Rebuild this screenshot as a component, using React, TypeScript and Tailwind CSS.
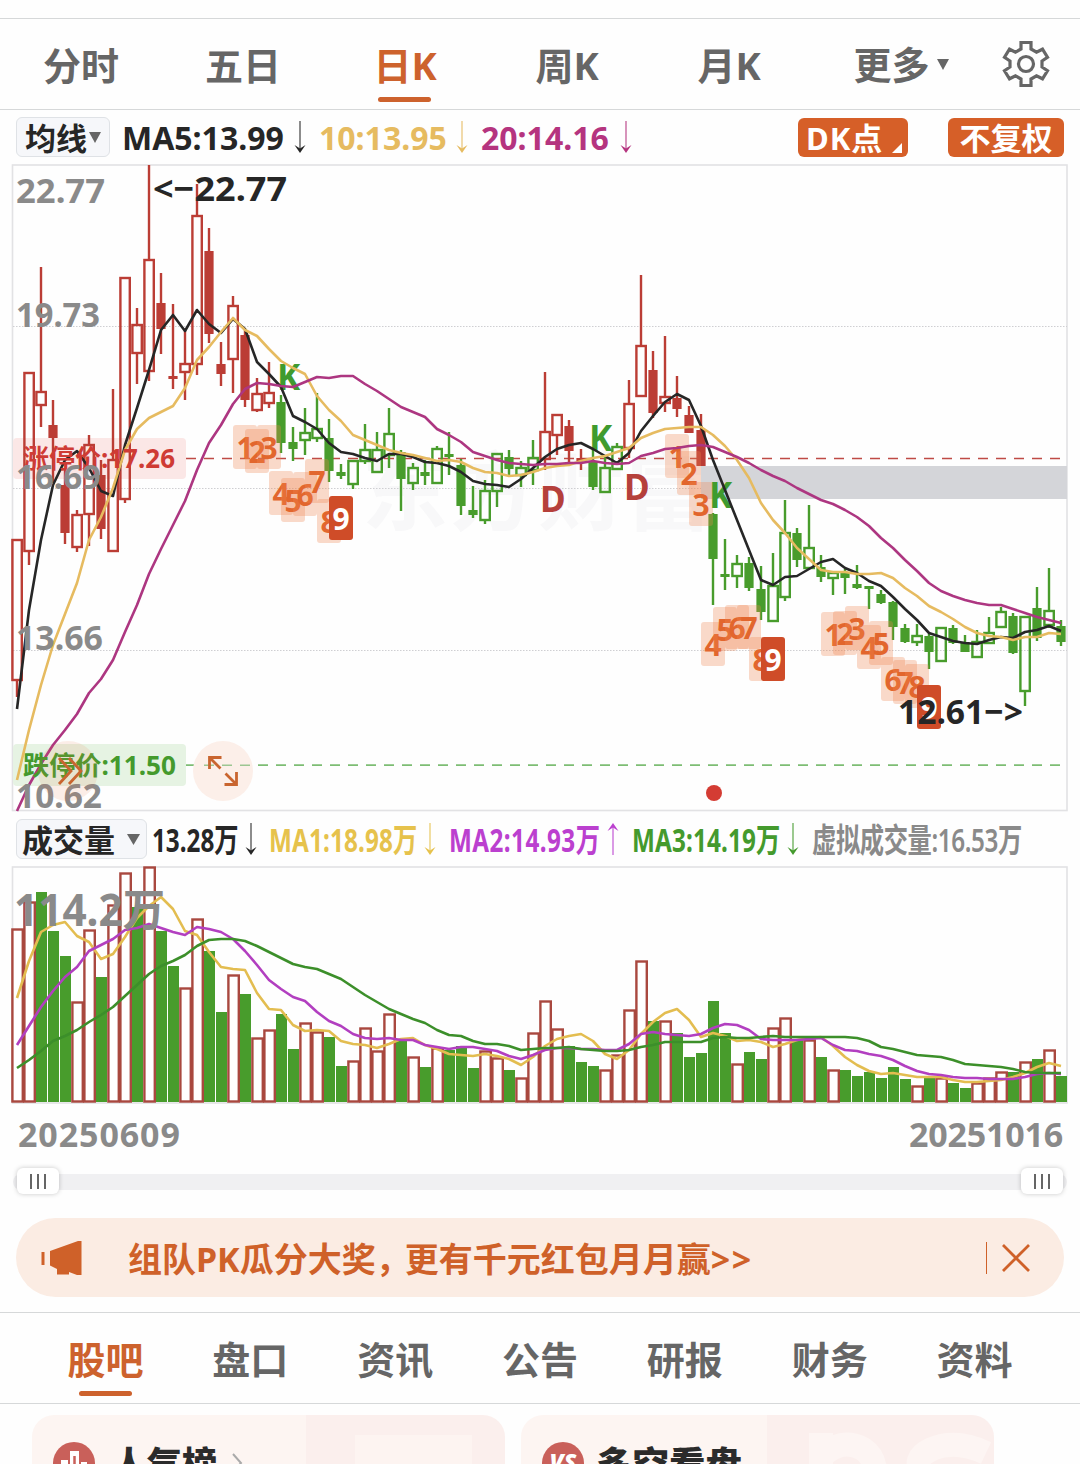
import clsx from "clsx";

const RED = "#bb3d35";
const GREEN = "#489c2c";

// R/G = hollow candle, r/g = filled candle: [kind, high, bodyTop, bodyBottom, low]
type Candle = [string, number, number, number, number];

const candles: Candle[] = [
  ["R", 540, 540, 680, 697], ["R", 373, 373, 551, 565], ["R", 267, 392, 405, 427],
  ["r", 400, 425, 438, 483], ["r", 468, 485, 533, 544], ["R", 510, 515, 547, 552],
  ["R", 435, 445, 514, 546], ["r", 460, 475, 529, 539], ["R", 389, 460, 551, 551],
  ["R", 278, 278, 499, 503], ["R", 308, 325, 353, 384], ["R", 165, 260, 371, 381],
  ["r", 273, 303, 329, 354], ["r", 304, 376, 379, 389], ["R", 330, 364, 372, 400],
  ["R", 184, 216, 364, 375], ["r", 228, 251, 334, 343], ["r", 342, 364, 374, 386],
  ["R", 296, 306, 359, 393], ["r", 330, 335, 400, 407], ["R", 378, 394, 410, 412],
  ["R", 362, 393, 403, 408], ["g", 395, 402, 443, 453], ["g", 427, 442, 449, 461],
  ["G", 408, 433, 440, 455], ["G", 393, 429, 438, 442], ["g", 419, 438, 471, 482],
  ["g", 464, 472, 476, 479], ["G", 461, 461, 484, 489], ["G", 424, 450, 461, 464],
  ["G", 432, 450, 472, 472], ["G", 408, 434, 455, 468], ["g", 450, 452, 479, 511],
  ["G", 463, 468, 483, 490], ["g", 460, 472, 476, 485], ["G", 446, 449, 483, 483],
  ["g", 432, 454, 457, 475], ["g", 459, 465, 506, 515], ["g", 486, 510, 515, 518],
  ["G", 480, 491, 520, 524], ["G", 454, 454, 491, 507], ["g", 450, 457, 469, 476],
  ["G", 461, 468, 475, 487], ["G", 440, 458, 470, 485], ["R", 372, 432, 459, 470],
  ["R", 414, 415, 435, 455], ["r", 420, 426, 451, 465], ["r", 449, 458, 461, 470],
  ["g", 450, 462, 487, 490], ["G", 455, 468, 492, 492], ["G", 443, 447, 469, 469],
  ["R", 380, 404, 448, 458], ["R", 275, 346, 396, 396], ["r", 351, 370, 413, 418],
  ["R", 336, 397, 403, 412], ["r", 376, 398, 409, 417], ["r", 406, 415, 433, 433],
  ["r", 414, 430, 466, 466], ["g", 513, 514, 559, 605], ["g", 539, 574, 577, 590],
  ["G", 555, 564, 576, 588], ["g", 557, 563, 588, 591], ["g", 566, 589, 612, 620],
  ["G", 553, 586, 621, 621], ["G", 500, 533, 597, 601], ["g", 528, 533, 560, 567],
  ["G", 505, 548, 568, 568], ["g", 555, 567, 577, 582], ["G", 573, 573, 578, 595],
  ["g", 569, 573, 578, 594], ["g", 565, 584, 588, 589], ["g", 587, 586, 589, 609],
  ["g", 590, 594, 603, 604], ["g", 601, 602, 627, 640], ["g", 624, 628, 642, 643],
  ["G", 624, 636, 642, 646], ["g", 634, 636, 652, 669], ["G", 628, 628, 661, 661],
  ["g", 625, 628, 643, 644], ["g", 635, 643, 652, 652], ["G", 630, 642, 657, 657],
  ["G", 617, 633, 643, 643], ["G", 607, 612, 627, 627], ["g", 613, 616, 653, 654],
  ["G", 617, 617, 691, 706], ["g", 587, 608, 638, 641], ["G", 568, 611, 625, 628],
  ["g", 620, 626, 642, 646],
];

const ma5 = [
  709, 610, 540, 485, 460, 451, 468, 491, 496, 445, 408, 370, 330, 315, 331, 310, 324, 333, 319, 329,
  362, 374, 387, 416, 422, 429, 443, 452, 454, 458, 461, 454, 454, 457, 462, 463, 466, 472, 481, 484,
  485, 487, 479, 468, 457, 449, 445, 443, 449, 456, 463, 453, 431, 416, 402, 394, 400, 426, 460, 490,
  520, 550, 580, 585, 577, 576, 569, 562, 559, 568, 573, 581, 586, 597, 609, 620, 633, 637, 641, 643,
  644, 640, 637, 638, 632, 630, 626, 631,
];
const ma10 = [
  780, 730, 685, 645, 614, 583, 540, 517, 488, 450, 429, 418, 412, 406, 388, 360, 347, 332, 318, 330,
  336, 349, 361, 368, 374, 396, 410, 421, 435, 440, 445, 450, 453, 455, 458, 461, 460, 462, 468, 472,
  473, 476, 475, 472, 468, 466, 465, 461, 458, 456, 452, 448, 438, 433, 429, 428, 427, 427, 435, 446,
  460, 478, 503, 520, 533, 548, 559, 570, 572, 572, 574, 574, 573, 578, 588, 596, 606, 612, 619, 627,
  633, 636, 637, 640, 637, 637, 633, 634,
];
const ma20 = [
  811, 785, 764, 745, 730, 714, 693, 679, 660, 632, 605, 574, 549, 525, 501, 470, 443, 425, 404, 389,
  383, 384, 386, 387, 382, 377, 378, 376, 376, 384, 391, 399, 407, 412, 417, 429, 435, 442, 452, 456,
  460, 463, 464, 465, 464, 464, 463, 463, 461, 463, 464, 463, 456, 453, 449, 448, 446, 445, 447, 452,
  457, 463, 470, 476, 481, 488, 494, 500, 504, 510, 517, 526, 538, 548, 560, 571, 583, 591, 596, 600,
  603, 605, 605, 609, 613, 617, 620, 623,
];

const volumeKinds =
  "RRGGGRRGRRGRGGRRGGRGRRGGRRGGRRRRGRGRGGGRRGRRRRGGGRRRRGRGGGGGRGGRRGRGRGGGGGGRGRGGRRRGRGRG";
const volumes = [
  929, 902, 892, 931, 956, 1002, 930, 977, 905, 873, 907, 867, 931, 966, 988, 919, 951, 1012, 975, 994,
  1038, 1030, 1014, 1049, 1023, 1032, 1037, 1066, 1061, 1028, 1051, 1014, 1040, 1057, 1067, 1048, 1050, 1046, 1068, 1051,
  1058, 1070, 1078, 1033, 1001, 1029, 1046, 1062, 1066, 1070, 1055, 1010, 961, 1021, 1021, 1033, 1057, 1053, 1001, 1033,
  1064, 1052, 1059, 1028, 1018, 1040, 1040, 1057, 1070, 1070, 1076, 1072, 1078, 1067, 1079, 1086, 1077, 1078, 1083, 1088,
  1083, 1078, 1072, 1072, 1062, 1059, 1050, 1076,
];
const volMa1 = [
  998, 961, 932, 925, 922, 936, 942, 959, 954, 937, 918, 906, 897, 909, 931, 935, 952, 967, 969, 970,
  993, 1009, 1010, 1025, 1031, 1030, 1031, 1041, 1044, 1045, 1048, 1044, 1039, 1038, 1045, 1049, 1054, 1055, 1056, 1054,
  1056, 1059, 1065, 1057, 1046, 1039, 1036, 1034, 1041, 1054, 1059, 1050, 1034, 1022, 1013, 1009, 1020, 1037, 1033, 1036,
  1041, 1040, 1042, 1047, 1044, 1040, 1038, 1037, 1046, 1057, 1065, 1071, 1074, 1073, 1075, 1077, 1077, 1077, 1080, 1082,
  1082, 1081, 1080, 1077, 1073, 1067, 1063, 1066,
];
const volMa2 = [
  1045, 1026, 1007, 991, 977, 967, 951, 945, 939, 930, 928, 924, 928, 932, 935, 927, 929, 932, 939, 951,
  965, 980, 989, 997, 1001, 1012, 1021, 1026, 1034, 1038, 1039, 1038, 1040, 1040, 1045, 1047, 1049, 1047, 1047, 1049,
  1051, 1056, 1059, 1055, 1050, 1048, 1048, 1049, 1049, 1050, 1050, 1044, 1034, 1032, 1034, 1035, 1036, 1034, 1028, 1024,
  1025, 1030, 1039, 1040, 1040, 1040, 1039, 1038, 1045, 1050, 1051, 1054, 1056, 1060, 1066, 1071, 1074, 1075, 1077, 1078,
  1078, 1079, 1079, 1079, 1077, 1074, 1073, 1074,
];
const volMa3 = [
  1068, 1060, 1051, 1041, 1036, 1030, 1022, 1015, 1007, 996, 985, 974, 966, 961, 955, 946, 940, 939, 939, 941,
  946, 952, 958, 964, 967, 969, 974, 979, 987, 995, 1002, 1009, 1014, 1019, 1023, 1030, 1035, 1036, 1041, 1044,
  1044, 1046, 1050, 1049, 1048, 1048, 1047, 1049, 1050, 1051, 1051, 1050, 1047, 1045, 1042, 1042, 1042, 1042, 1038, 1037,
  1038, 1038, 1037, 1036, 1037, 1037, 1037, 1037, 1037, 1037, 1038, 1041, 1047, 1049, 1052, 1055, 1056, 1057, 1060, 1064,
  1065, 1066, 1067, 1069, 1072, 1073, 1073, 1073,
];

// nine-turn marks: [candle index, number, top of the box]
const marks = [
  [19, 1, 425], [20, 2, 429], [21, 3, 425], [22, 4, 471], [23, 5, 478], [24, 6, 472], [25, 7, 459], [26, 8, 499], [27, 9, 496],
  [55, 1, 434], [56, 2, 451], [57, 3, 482], [58, 4, 622], [59, 5, 607], [60, 6, 605], [61, 7, 605], [62, 8, 637], [63, 9, 637],
  [68, 1, 612], [69, 2, 611], [70, 3, 606], [71, 4, 625], [72, 5, 621], [73, 6, 657], [74, 7, 660], [75, 8, 664], [76, 9, 685],
];

const kdMarks = [
  { t: "K", x: 277, y: 390, c: "#3f9b2f" },
  { t: "K", x: 589, y: 451, c: "#3f9b2f" },
  { t: "K", x: 709, y: 508, c: "#3f9b2f" },
  { t: "D", x: 540, y: 512, c: "#b5403b" },
  { t: "D", x: 624, y: 500, c: "#b5403b" },
];

const axis = [
  { t: "22.77", y: 203, w: 89 },
  { t: "19.73", y: 327, w: 84 },
  { t: "16.69", y: 489, w: 85 },
  { t: "13.66", y: 650, w: 87 },
  { t: "10.62", y: 808, w: 86 },
];

const xAt = (i: number) => 17 + i * 12;

function Line({ values, color }: { values: number[]; color: string }) {
  return (
    <polyline
      points={values.map((v, i) => `${xAt(i)},${v}`).join(" ")}
      fill="none"
      stroke={color}
      strokeWidth="2.6"
      strokeLinejoin="round"
    />
  );
}

function CandleShape({ item, i }: { item: Candle; i: number }) {
  const [kind, high, top, bottom, low] = item;
  const x = xAt(i);
  const color = kind === "R" || kind === "r" ? RED : GREEN;
  const hollow = kind === "R" || kind === "G";

  return (
    <g stroke={color} strokeWidth="2.4">
      {high < top && <line x1={x} x2={x} y1={high} y2={top} />}
      {low > bottom && <line x1={x} x2={x} y1={bottom} y2={low} />}
      {hollow ? (
        <rect x={x - 4.6} y={top} width="9.4" height={bottom - top} fill="none" />
      ) : (
        <rect x={x - 4.6} y={top} width="9.2" height={bottom - top} fill={color} stroke="none" />
      )}
    </g>
  );
}

function PriceChart() {
  return (
    <svg viewBox="0 164 1080 648" className="block h-[648px] w-full font-bold">
      <rect x="12.5" y="165" width="1054.5" height="645.5" fill="none" stroke="#e2e2e4" strokeWidth="1.6" />
      <text x="362" y="524" fontSize="86" textLength="350" fill="#f8f8f9">
        东方财富
      </text>
      {[326, 488, 650].map((y) => (
        <line key={y} x1="13" x2="1067" y1={y + 0.5} y2={y + 0.5} stroke="#cfcfd2" strokeDasharray="1.5 1.5" />
      ))}
      <rect x="701" y="466" width="366" height="33" fill="#d4d5d9" />

      <rect x="13" y="438" width="173" height="41" rx="4" fill="#fbe7e6" />
      <line x1="186" x2="1062" y1="458.5" y2="458.5" stroke="#bf4b46" strokeWidth="1.5" strokeDasharray="10 8" />
      <rect x="13" y="744" width="173" height="42" rx="4" fill="#e6f3e3" />
      <line x1="186" x2="1062" y1="765.2" y2="765.2" stroke="#7dbd74" strokeWidth="1.7" strokeDasharray="10 8" />

      {candles.map((item, i) => (
        <CandleShape key={i} item={item} i={i} />
      ))}

      {marks.map(([i, n, top], k) => (
        <g key={k} fontSize="30" textAnchor="middle">
          <rect
            x={xAt(i) - 12}
            y={top}
            width="24"
            height="44"
            rx="3"
            fill={n === 9 ? "#cf4c28" : "#ee8350"}
            fillOpacity={n === 9 ? 1 : 0.3}
          />
          <text x={xAt(i)} y={top + 33.5} fill={n === 9 ? "#fff" : "#e2662d"}>
            {n}
          </text>
        </g>
      ))}
      {kdMarks.map((m) => (
        <text key={m.x} x={m.x} y={m.y} fontSize="35" fill={m.c}>
          {m.t}
        </text>
      ))}

      <Line values={ma5} color="#262626" />
      <Line values={ma10} color="#e6bb60" />
      <Line values={ma20} color="#ad3681" />

      <g fontSize="26">
        <text x="23" y="468" fill="#cf3b34" textLength="152" lengthAdjust="spacingAndGlyphs">
          涨停价:17.26
        </text>
        <text x="23" y="775" fill="#449a2d" textLength="153" lengthAdjust="spacingAndGlyphs">
          跌停价:11.50
        </text>
      </g>
      <g fontSize="34.5" fill="#8a8a8a">
        {axis.map((a) => (
          <text key={a.t} x="16" y={a.y} textLength={a.w} lengthAdjust="spacingAndGlyphs">
            {a.t}
          </text>
        ))}
      </g>
      <g fontSize="34.5" fill="#262626">
        <text x="153" y="201" textLength="134" lengthAdjust="spacingAndGlyphs">
          &lt;−22.77
        </text>
        <text x="898" y="724" textLength="125" lengthAdjust="spacingAndGlyphs">
          12.61−&gt;
        </text>
      </g>

      <circle cx="68" cy="771" r="30" fill="#e8763e" fillOpacity="0.12" />
      <circle cx="223" cy="771" r="30" fill="#fcefe9" />
      <line x1="204" x2="252" y1="765.2" y2="765.2" stroke="#9cc692" strokeWidth="1.4" strokeDasharray="10 8" />
      <g fill="none" stroke="#c9652f" strokeWidth="2.8">
        <path d="M59 758l12 13-12 13M69 758l12 13-12 13" />
        <path d="M209.5 769V757.5H221.5M210 758L220.5 768.5M236.5 772V784.5H224.5M236 784L225.5 773.5" />
      </g>
      <circle cx="714" cy="793" r="8" fill="#d43c33" />
    </svg>
  );
}

function VolumeChart() {
  return (
    <svg viewBox="0 866 1080 238" className="block h-[238px] w-full font-bold">
      <rect x="12.5" y="867" width="1054.5" height="236" fill="none" stroke="#e2e2e4" strokeWidth="1.6" />
      {volumes.map((top, i) =>
        volumeKinds[i] === "R" ? (
          <rect key={i} x={xAt(i) - 4.6} y={top + 0.5} width="10.4" height={1101 - top} fill="#fff" stroke="#a9483f" strokeWidth="2.4" />
        ) : (
          <rect key={i} x={xAt(i) - 5} y={top} width="11" height={1102 - top} fill={GREEN} />
        )
      )}
      <Line values={volMa1} color="#e3bd50" />
      <Line values={volMa2} color="#b23fc0" />
      <Line values={volMa3} color="#3c8f2a" />
      <text x="14" y="926" fontSize="44" fill="#8a8a8a" textLength="151" lengthAdjust="spacingAndGlyphs">
        114.2万
      </text>
    </svg>
  );
}

function Arrow({ up, className }: { up?: boolean; className?: string }) {
  return (
    <svg viewBox="0 0 12 32" className={clsx("h-8 w-3 shrink-0", up && "rotate-180", className)}>
      <path d="M6 0v29" stroke="currentColor" strokeWidth="1.4" opacity="0.75" />
      <path d="M0.5 24L6 27.5L11.5 24L6 32z" fill="currentColor" />
    </svg>
  );
}

function Condensed({ text, className }: { text: string; className: string }) {
  return (
    <div className={clsx("shrink-0 pt-px whitespace-nowrap", className)}>
      <span className="inline-block origin-left scale-x-[0.735]">{text}</span>
    </div>
  );
}

function Grip() {
  return (
    <div className="z-10 mb-[2px] flex h-[26px] w-[42px] items-center justify-center gap-[5px] rounded-md bg-white shadow-[0_0_5px_rgba(0,0,0,0.22)]">
      <i className="h-[15px] w-[2px] bg-[#666]" />
      <i className="h-[15px] w-[2px] bg-[#666]" />
      <i className="h-[15px] w-[2px] bg-[#666]" />
    </div>
  );
}

export default function App() {
  const periods = ["分时", "五日", "日K", "周K", "月K"];
  const sections = ["股吧", "盘口", "资讯", "公告", "研报", "财务", "资料"];

  return (
    <div
      lang="zh-CN"
      className="flex h-[1464px] w-[1080px] flex-col overflow-hidden bg-[#fefefe] pt-[18px] font-['Noto_Sans','Noto_Sans_CJK_SC',sans-serif] text-[#262626]"
    >
      <div className="flex h-[92px] shrink-0 border-y border-[#d6d8d9] text-[38px] leading-[92px] font-bold text-[#666]">
        {periods.map((p) => (
          <div key={p} className={clsx("relative h-[90px] w-[162px] text-center", p === "日K" && "text-[#cd622d]")}>
            {p}
            {p === "日K" && (
              <span className="absolute bottom-[7px] left-[54px] h-[5px] w-[53px] rounded-full bg-[#cd622d]" />
            )}
          </div>
        ))}
        <div className="flex h-[90px] w-[182px] items-center justify-center gap-[7px]">
          <span>更多</span>
          <svg viewBox="0 0 12 11" className="h-[11px] w-3">
            <path d="M0 0h12L6 11z" fill="#666" />
          </svg>
        </div>
        <div className="flex h-[90px] w-[68px] items-center justify-center">
          <svg viewBox="0 0 48 48" className="h-12 w-12" fill="none" stroke="#666" strokeWidth="3.2">
            <path d="M19 2.5h10v6.500l5.500 3.200 6-3 5 8-5.500 3.800v6l5.500 3.800-5 8-6-3L29 39v6.500H19V39l-5.500-3.200-6 3-5-8L8 27v-6l-5.500-3.800 5-8 6 3L19 9z" />
            <circle cx="24" cy="24" r="7.5" />
          </svg>
        </div>
      </div>

      <div className="flex h-[54px] shrink-0 items-center px-4 text-[32px] font-bold whitespace-nowrap">
        <div className="flex h-10 w-[94px] items-center justify-center gap-[2px] rounded-md border border-[#dfe2e6] bg-[#f6f7fa] text-[31px]">
          <span className="pt-[3px]">均线</span>
          <svg viewBox="0 0 12 11" className="h-[11px] w-3">
            <path d="M0 0h12L6 11z" fill="#666" />
          </svg>
        </div>
        <span className="ml-3 w-[166px] pt-px">MA5:13.99</span>
        <Arrow className="ml-1.5" />
        <span className="ml-[13px] w-[131px] pt-px text-[#e6bb60]">10:13.95</span>
        <Arrow className="ml-[6px] text-[#e6bb60]" />
        <span className="ml-[13px] w-[131px] pt-px text-[#b5347f]">20:14.16</span>
        <Arrow className="ml-2 text-[#b5347f]" />
        <div className="ml-auto flex h-[39px] w-[110px] items-center rounded-md bg-[#d65f28] pl-2 text-[31px] text-white">
          <span className="w-[80px] pt-[3px] tracking-[1px]">DK点</span>
          <svg viewBox="0 0 10 10" className="mt-[22px] ml-[6px] h-2.5 w-2.5 shrink-0">
            <path d="M10 0v10H0z" fill="#fff" />
          </svg>
        </div>
        <div className="ml-10 flex h-[39px] w-[116px] items-center justify-center rounded-md bg-[#d65f28] pt-[3px] text-[31px] text-white">
          不复权
        </div>
      </div>

      <div className="shrink-0">
        <PriceChart />
      </div>

      <div className="flex h-[54px] shrink-0 items-center pl-4 text-[33px] font-bold">
        <div className="flex h-10 w-[131px] shrink-0 items-center gap-3 rounded-md border border-[#dfe2e6] bg-[#f6f7fa] pl-[5px] text-[31px]">
          <span className="pt-[3px]">成交量</span>
          <svg viewBox="0 0 13 11" className="h-[11px] w-[13px]">
            <path d="M0 0h13L6.5 11z" fill="#666" />
          </svg>
        </div>
        <Condensed text="13.28万" className="ml-[5px] w-[93px]" />
        <Arrow />
        <Condensed text="MA1:18.98万" className="ml-3 w-[155px] tracking-[0.2px] text-[#e6c24c]" />
        <Arrow className="text-[#e6c24c]" />
        <Condensed text="MA2:14.93万" className="ml-[13px] w-[158px] tracking-[0.6px] text-[#bb40cf]" />
        <Arrow up className="text-[#bb40cf]" />
        <Condensed text="MA3:14.19万" className="ml-[13px] w-[155px] tracking-[0.2px] text-[#449a2d]" />
        <Arrow className="text-[#449a2d]" />
        <Condensed text="虚拟成交量:16.53万" className="ml-[13px] w-[220px] font-semibold tracking-[-0.5px] text-[#8a8a8a]" />
      </div>

      <div className="shrink-0">
        <VolumeChart />
      </div>

      <div className="flex h-[60px] shrink-0 items-center justify-between pr-[17px] pl-[18px] text-[34px] font-bold text-[#8a8a8a]">
        <span className="tracking-[0.9px]">20250609</span>
        <span className="tracking-[-0.2px]">20251016</span>
      </div>

      <div className="mx-[13px] mt-[10px] flex h-4 shrink-0 items-center justify-between rounded-full bg-[#f0f0f2] px-1">
        <Grip />
        <Grip />
      </div>

      <div className="mx-4 mt-7 flex h-[79px] shrink-0 items-center rounded-full bg-[#fbece3] pr-[34px] pl-[25px] text-[#cf6129]">
        <svg viewBox="0 0 42 36" className="h-9 w-[42px]" fill="currentColor">
          <path d="M0.5 12h3v13h-3zM9 11L37 1h3.5v34H36l-8-3v2.5H16V29L9 25.5z" />
        </svg>
        <span className="ml-[45px] pt-[3px] text-[34px] font-bold whitespace-nowrap">
          组队PK瓜分大奖<span className="-mr-[5px]">，</span>更有千元红包月月赢
          <span className="tracking-[1.5px]">&gt;&gt;</span>
        </span>
        <span className="ml-auto h-8 w-px bg-[#cf6129]" />
        <svg viewBox="0 0 28 28" className="ml-[15px] h-7 w-7" stroke="currentColor" strokeWidth="2.8">
          <path d="M1 1l26 26M27 1L1 27" />
        </svg>
      </div>

      <div className="mt-[15px] flex h-[92px] shrink-0 border-y border-[#d6d8d9] px-[33px] text-[38px] leading-[92px] font-bold text-[#666]">
        {sections.map((s, i) => (
          <div key={s} className={clsx("relative h-[90px] flex-1 text-center", i === 0 && "text-[#cd622d]")}>
            {s}
            {i === 0 && (
              <span className="absolute bottom-[7px] left-[46px] h-[5px] w-[53px] rounded-full bg-[#cd622d]" />
            )}
          </div>
        ))}
      </div>

      <div className="mt-[11px] flex shrink-0 gap-4 pl-8 text-[35px] font-black text-[#2b2b2b]">
        <div className="flex h-24 w-[473px] items-center rounded-[22px] bg-[linear-gradient(90deg,#fdf5f2_58%,#fbefed_58%)] pl-[21px]">
          <svg viewBox="0 0 42 42" className="h-[42px] w-[42px]">
            <circle cx="21" cy="21" r="21" fill="#c9605a" />
            <path d="M8 18h7v16H8zM17 9h9v25h-9zM28 20h6v14h-6z" fill="#fff" />
            <path d="M21.5 14v14" stroke="#c9605a" strokeWidth="2.5" />
          </svg>
          <span className="ml-[17px] pt-[3px]">人气榜</span>
          <svg viewBox="0 0 12 20" className="ml-3.5 h-5 w-3" fill="none" stroke="#aaa" strokeWidth="2">
            <path d="M2 1l8 9-8 9" />
          </svg>
          <div className="mt-5 mr-[33px] ml-auto h-[76px] w-[117px] bg-[#fdf4f1]" />
        </div>
        <div className="flex h-24 w-[473px] items-center overflow-hidden rounded-[22px] bg-[linear-gradient(90deg,#fdf5f2_52%,#fbefed_52%)] pl-[21px]">
          <div className="flex h-[42px] w-[42px] items-center justify-center rounded-full bg-[#c9605a] pb-1 text-[23px] text-white italic">
            VS
          </div>
          <span className="ml-3 pt-[3px] text-[36.5px]">多空看盘</span>
          <svg viewBox="0 0 190 80" className="mt-4 ml-auto h-20 w-[190px]" fill="none" stroke="#fdf5f3" strokeWidth="24">
            <path d="M17 2v78M17 26q20-20 42-8 12 8 12 24v38M182 22q-30-14-54-4-22 10-8 26l40 18" />
          </svg>
        </div>
      </div>
    </div>
  );
}
